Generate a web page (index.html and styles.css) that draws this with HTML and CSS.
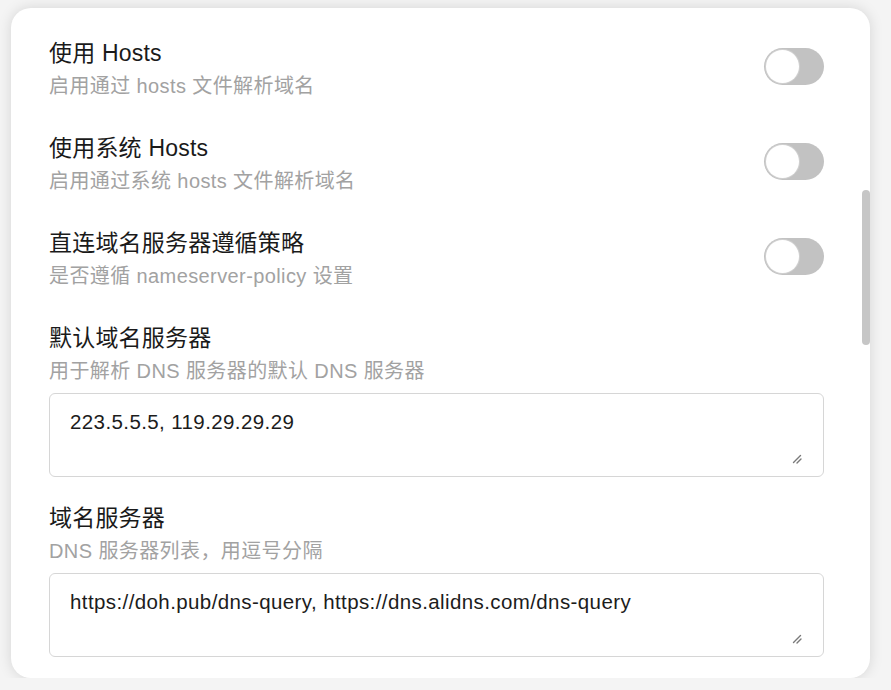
FILE: index.html
```html
<!DOCTYPE html>
<html lang="zh-CN">

<head>
    <meta charset="UTF-8">
    <title>DNS 设置</title>
    <link rel="stylesheet" href="styles.css">
</head>

<body>
    <div class="card">
        <div class="item">
            <div class="info">
                <div class="title">使用 Hosts</div>
                <div class="desc">启用通过 hosts 文件解析域名</div>
            </div>
            <span class="switch"><span class="knob"></span></span>
        </div>
        <div class="item">
            <div class="info">
                <div class="title">使用系统 Hosts</div>
                <div class="desc">启用通过系统 hosts 文件解析域名</div>
            </div>
            <span class="switch"><span class="knob"></span></span>
        </div>
        <div class="item">
            <div class="info">
                <div class="title">直连域名服务器遵循策略</div>
                <div class="desc">是否遵循 nameserver-policy 设置</div>
            </div>
            <span class="switch"><span class="knob"></span></span>
        </div>
        <div class="item block">
            <div class="title">默认域名服务器</div>
            <div class="desc">用于解析 DNS 服务器的默认 DNS 服务器</div>
            <div class="field">
                <textarea class="input">223.5.5.5, 119.29.29.29</textarea>
                <svg class="grip" width="10" height="10" viewBox="0 0 10 10">
                    <path d="M8.5 1.5 L1.5 8.5 M9 5 L5 9" stroke="#7a7a7a" stroke-width="1.4" stroke-linecap="round" />
                </svg>
            </div>
        </div>
        <div class="item block">
            <div class="title">域名服务器</div>
            <div class="desc">DNS 服务器列表，用逗号分隔</div>
            <div class="field">
                <textarea class="input">https://doh.pub/dns-query, https://dns.alidns.com/dns-query</textarea>
                <svg class="grip" width="10" height="10" viewBox="0 0 10 10">
                    <path d="M8.5 1.5 L1.5 8.5 M9 5 L5 9" stroke="#7a7a7a" stroke-width="1.4" stroke-linecap="round" />
                </svg>
            </div>
        </div>
        <!-- 滚动条 -->
        <div class="thumb"></div>
    </div>
</body>

</html>
```

FILE: styles.css
```css
* {
    padding: 0;
    margin: 0;
    box-sizing: border-box;
}

body {
    background: #f4f4f4;
    font-family: "Liberation Sans", "Noto Sans CJK SC", sans-serif;
    padding: 8px 21px 0 11px;
}

.card {
    position: relative;
    height: 670px;
    background: #fff;
    border-radius: 20px;
    box-shadow: 0 0 14px rgba(0, 0, 0, 0.13);
    padding: 14px 46px 0 38px;
    overflow: hidden;
}

.item {
    display: flex;
    justify-content: space-between;
    align-items: flex-start;
    padding: 16px 0;
}

.item.block {
    display: block;
    padding-bottom: 10px;
}

.title {
    font-size: 23px;
    line-height: 30px;
    letter-spacing: 0.2px;
    color: #1a1a1a;
}

.desc {
    font-size: 20px;
    line-height: 30px;
    letter-spacing: 0.4px;
    margin-top: 3px;
    color: #a2a2a2;
}

.switch {
    display: flex;
    align-items: center;
    width: 60px;
    height: 37px;
    margin-top: 10px;
    padding: 2px;
    border-radius: 19px;
    background: #c2c2c2;
}

.knob {
    width: 33px;
    height: 33px;
    border-radius: 50%;
    background: #fff;
    box-shadow: 0 0 0 1px #d0d0d0;
}

.field {
    position: relative;
    margin-top: 7px;
}

.input {
    display: block;
    width: 100%;
    height: 84px;
    padding: 15px 20px;
    border: 1px solid #d6d6d6;
    border-radius: 6px;
    font-family: "Liberation Sans", "Noto Sans CJK SC", sans-serif;
    font-size: 20.5px;
    letter-spacing: 0.4px;
    line-height: 26px;
    color: #1c1c1c;
    background: #fff;
    outline: none;
    resize: none;
}

.grip {
    position: absolute;
    right: 22px;
    bottom: 13px;
}

.thumb {
    position: absolute;
    right: 0;
    top: 182px;
    width: 8px;
    height: 155px;
    border-radius: 4px;
    background: #c6c6c6;
}
```
